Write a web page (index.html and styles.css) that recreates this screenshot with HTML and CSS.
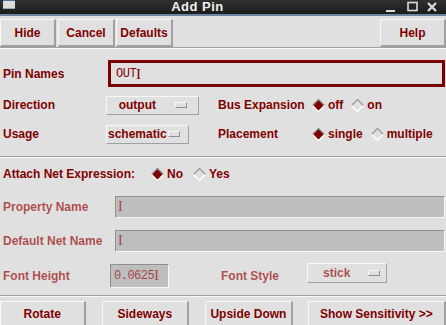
FILE: index.html
```html
<!DOCTYPE html>
<html>
<head>
<meta charset="utf-8">
<link rel="stylesheet" href="styles.css">
</head>
<body>
<div class="titlebar">
  <div class="winicon"></div>
  <div class="title">Add Pin</div>
  <div class="wctl">
    <svg width="58" height="14" viewBox="0 0 58 14">
      <rect x="6" y="10" width="9" height="2" fill="#dcdcdc"/>
      <rect x="28" y="2.5" width="9" height="8" fill="none" stroke="#dcdcdc" stroke-width="1.6"/>
      <path d="M48 3 L56 11 M56 3 L48 11" stroke="#dcdcdc" stroke-width="2.2"/>
    </svg>
  </div>
</div>
<div class="toolbar">
  <div class="btn w-hide">Hide</div>
  <div class="btn w-cancel">Cancel</div>
  <div class="btn w-def">Defaults</div>
  <div class="spacer"></div>
  <div class="btn w-help">Help</div>
</div>
<div class="sep"></div>
<div class="form">
  <div class="row r-pin">
    <div class="label">Pin Names</div>
    <div class="pinfield"><span class="mono">OUT</span><span class="caret">I</span></div>
  </div>
  <div class="row r-dir">
    <div class="label">Direction</div>
    <div class="dd dd-dir"><span class="ddtext">output</span><span class="ind"></span></div>
    <div class="label2">Bus Expansion</div>
    <div class="radio"><svg class="dia" viewBox="0 0 12 12"><polygon points="6,0.5 11.5,6 6,11.5 0.5,6" fill="#800000"/><path d="M0.5 6 L6 0.5 L11.5 6" fill="none" stroke="#888" stroke-width="1.2"/><path d="M0.5 6 L6 11.5 L11.5 6" fill="none" stroke="#fff" stroke-width="1.2"/></svg>off</div>
    <div class="radio"><svg class="dia" viewBox="0 0 12 12"><path d="M0.5 6 L6 0.5 L11.5 6" fill="none" stroke="#999" stroke-width="1.2"/><path d="M0.5 6 L6 11.5 L11.5 6" fill="none" stroke="#fff" stroke-width="1.2"/></svg>on</div>
  </div>
  <div class="row r-use">
    <div class="label">Usage</div>
    <div class="dd dd-use"><span class="ddtext">schematic</span><span class="ind"></span></div>
    <div class="label2 l2b">Placement</div>
    <div class="radio"><svg class="dia" viewBox="0 0 12 12"><polygon points="6,0.5 11.5,6 6,11.5 0.5,6" fill="#800000"/><path d="M0.5 6 L6 0.5 L11.5 6" fill="none" stroke="#888" stroke-width="1.2"/><path d="M0.5 6 L6 11.5 L11.5 6" fill="none" stroke="#fff" stroke-width="1.2"/></svg>single</div>
    <div class="radio"><svg class="dia" viewBox="0 0 12 12"><path d="M0.5 6 L6 0.5 L11.5 6" fill="none" stroke="#999" stroke-width="1.2"/><path d="M0.5 6 L6 11.5 L11.5 6" fill="none" stroke="#fff" stroke-width="1.2"/></svg>multiple</div>
  </div>
  <div class="sep sep2"></div>
  <div class="row r-att">
    <div class="label">Attach Net Expression:</div>
    <div class="radio"><svg class="dia" viewBox="0 0 12 12"><polygon points="6,0.5 11.5,6 6,11.5 0.5,6" fill="#800000"/><path d="M0.5 6 L6 0.5 L11.5 6" fill="none" stroke="#888" stroke-width="1.2"/><path d="M0.5 6 L6 11.5 L11.5 6" fill="none" stroke="#fff" stroke-width="1.2"/></svg>No</div>
    <div class="radio"><svg class="dia" viewBox="0 0 12 12"><path d="M0.5 6 L6 0.5 L11.5 6" fill="none" stroke="#999" stroke-width="1.2"/><path d="M0.5 6 L6 11.5 L11.5 6" fill="none" stroke="#fff" stroke-width="1.2"/></svg>Yes</div>
  </div>
  <div class="row r-prop">
    <div class="dlabel">Property Name</div>
    <div class="dfield"><span class="dcaret">I</span></div>
  </div>
  <div class="row r-net">
    <div class="dlabel">Default Net Name</div>
    <div class="dfield"><span class="dcaret">I</span></div>
  </div>
  <div class="row r-fh">
    <div class="dlabel">Font Height</div>
    <div class="dfield fh"><span class="dmono">0.0625</span><span class="dcaret">I</span></div>
    <div class="dlabel fs">Font Style</div>
    <div class="dd dd-fs"><span class="ddtext dtext">stick</span><span class="ind"></span></div>
  </div>
</div>
<div class="sep sep3"></div>
<div class="bottombar">
  <div class="btn b-rot">Rotate</div>
  <div class="btn b-side">Sideways</div>
  <div class="btn b-up">Upside Down</div>
  <div class="btn b-show">Show Sensitivity &gt;&gt;</div>
</div>
</body>
</html>
```

FILE: styles.css
```css
html, body {
  margin: 0;
  padding: 0;
}
body {
  width: 446px;
  height: 325px;
  overflow: hidden;
  background: #e0e0e0;
  font-family: "Liberation Sans", Arial, sans-serif;
  font-weight: bold;
  font-size: 12px;
  line-height: 14px;
  color: #800000;
}
.titlebar {
  height: 14px;
  background: linear-gradient(#303030, #1c1c1c);
  border-bottom: 2px solid #6d84a3;
  display: flex;
  align-items: flex-start;
}
.winicon {
  width: 12px;
  height: 9px;
  margin-left: 3px;
  background: #dcdcdc;
  border-top: 1px solid #4a6fa0;
  border-bottom: 1px solid #9aa;
  box-sizing: border-box;
}
.title {
  flex: 1;
  text-align: center;
  color: #f0f0f0;
  font-size: 13px;
  line-height: 14px;
  letter-spacing: 0.5px;
}
.wctl {
  width: 66px;
  height: 14px;
}
.toolbar {
  display: flex;
  height: 31px;
  padding-top: 3px;
  box-sizing: border-box;
}
.spacer { flex: 1; }
.btn {
  box-sizing: border-box;
  border-top: 1px solid #f8f8f8;
  border-left: 1px solid #f8f8f8;
  border-right: 2px solid #a0a0a0;
  border-bottom: 2px solid #a0a0a0;
  display: flex;
  align-items: center;
  justify-content: center;
  height: 28px;
}
.w-hide { width: 56px; }
.w-cancel { width: 57px; margin-left: 2px; }
.w-def { width: 57px; margin-left: 1px; }
.w-help { width: 66px; }
.sep {
  height: 2px;
  border-top: 1px solid #a0a0a0;
  border-bottom: 1px solid #f8f8f8;
  box-sizing: border-box;
}
.form {
  padding-top: 11px;
}
.row {
  display: flex;
  align-items: center;
}
.label {
  padding-left: 3px;
}
.r-pin { height: 27px; }
.r-pin .label { width: 105px; }
.pinfield {
  box-sizing: border-box;
  width: 337px;
  height: 27px;
  border: 2px solid #800000;
  outline: 1px solid #6a0000;
  outline-offset: -3px;
  display: flex;
  align-items: center;
  padding-left: 6px;
}
.mono {
  font-family: "Liberation Mono", monospace;
  font-weight: normal;
  font-size: 12px;
  letter-spacing: -0.5px;
}
.caret {
  font-family: "Liberation Serif", serif;
  font-weight: normal;
  font-size: 15px;
}
.r-dir { height: 28px; margin-top: 4px; }
.r-use { height: 28px; margin-top: 1px; }
.r-dir .label, .r-use .label { width: 103px; }
.dd {
  box-sizing: border-box;
  border-top: 1px solid #f8f8f8;
  border-left: 1px solid #f8f8f8;
  border-right: 1px solid #a0a0a0;
  border-bottom: 1px solid #a0a0a0;
  height: 19px;
  display: flex;
  align-items: center;
}
.dd-dir { width: 93px; justify-content: flex-end; padding-right: 11px; }
.dd-dir .ddtext { margin-right: 19px; }
.dd-use { width: 83px; padding-left: 1px; padding-right: 8px; justify-content: space-between; }
.ind {
  width: 10px;
  height: 4px;
  background: #e0e0e0;
  border-top: 1px solid #f8f8f8;
  border-left: 1px solid #f8f8f8;
  border-right: 1px solid #909090;
  border-bottom: 1px solid #909090;
}
.label2 { margin-left: 19px; width: 94px; }
.l2b { margin-left: 29px; }
.radio {
  display: flex;
  align-items: center;
  margin-right: 8px;
}
.dia {
  width: 13px;
  height: 13px;
  margin-right: 3px;
}
.sep2 { margin-top: 8px; }
.r-att { height: 28px; margin-top: 2px; }
.r-att .label { width: 148px; }
.r-att .radio { margin-right: 10px; }
.dlabel, .dcaret, .dmono, .dtext {
  color: rgba(150, 0, 0, 0.68);
}
.dlabel {
  padding-left: 3px;
}
.r-prop, .r-net { height: 22px; }
.r-prop { margin-top: 8px; }
.r-net { margin-top: 12px; }
.r-prop .dlabel, .r-net .dlabel { width: 112px; }
.dfield {
  box-sizing: border-box;
  width: 330px;
  height: 22px;
  background: #bebebe;
  border-top: 1px solid #909090;
  border-left: 1px solid #909090;
  border-right: 1px solid #f8f8f8;
  border-bottom: 1px solid #f8f8f8;
  display: flex;
  align-items: center;
  padding-left: 2px;
}
.dcaret {
  font-family: "Liberation Serif", serif;
  font-weight: normal;
  font-size: 14px;
  line-height: 16px;
}
.dmono {
  font-family: "Liberation Mono", monospace;
  font-size: 12px;
  font-weight: normal;
  letter-spacing: -0.5px;
}
.r-fh { height: 24px; margin-top: 12px; }
.r-fh .dlabel:first-child { width: 107px; }
.fh { width: 59px; height: 24px; padding-left: 3px; }
.fs { margin-left: 49px; width: 86px; }
.dd-fs { width: 80px; height: 20px; justify-content: space-between; padding-left: 15px; padding-right: 6px; margin-top: -6px; }
.sep3 { margin-top: 7px; }
.bottombar {
  display: flex;
  padding-top: 4px;
}
.bottombar .btn { height: 26px; }
.b-rot { width: 86px; }
.b-side { width: 88px; margin-left: 16px; }
.b-up { width: 88px; margin-left: 16px; }
.b-show { width: 139px; margin-left: 15px; }
```
